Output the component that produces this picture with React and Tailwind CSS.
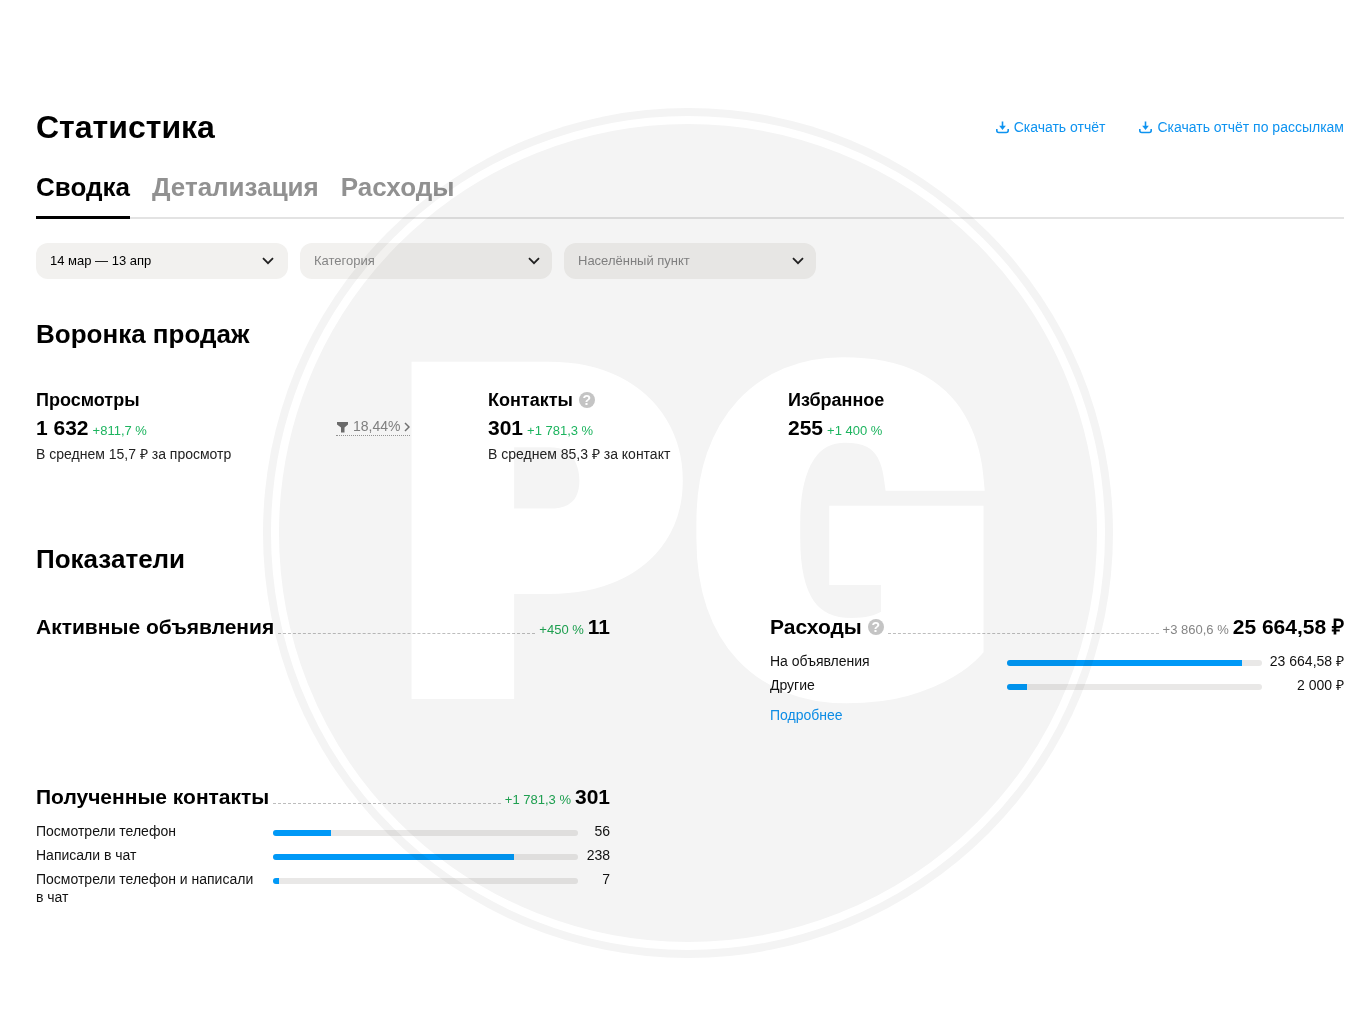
import { useState } from "react";

const tabs = ["Сводка", "Детализация", "Расходы"];

const expenses = [
  { label: "На объявления", value: "23 664,58 ₽", percent: 92 },
  { label: "Другие", value: "2 000 ₽", percent: 8 },
];

const contacts = [
  { label: "Посмотрели телефон", value: "56", percent: 19 },
  { label: "Написали в чат", value: "238", percent: 79 },
  { label: "Посмотрели телефон и написали в чат", value: "7", percent: 2 },
];

const Chevron = ({ className }) => (
  <svg className={className} width="12" height="8" viewBox="0 0 12 8" fill="none" stroke="#222" strokeWidth="1.8">
    <path d="M1 1.2 6 6.2 11 1.2" />
  </svg>
);

const DownloadLink = ({ children }) => (
  <a href="#" className="flex items-center gap-[5px] text-sm text-[#0e93f0]">
    <svg width="13" height="13" viewBox="0 0 13 13" fill="none" stroke="currentColor" strokeWidth="1.6">
      <path d="M6.5 0.5V6" />
      <path d="M3.2 4.8H9.8L6.5 9Z" fill="currentColor" stroke="none" />
      <path d="M0.8 8v1.5c0 1.3.8 2 2 2h7.4c1.2 0 2-.7 2-2V8" />
    </svg>
    {children}
  </a>
);

const HelpButton = () => (
  <button
    type="button"
    aria-label="Подсказка"
    className="flex size-4 shrink-0 items-center justify-center rounded-full bg-[#c4c4c4] text-sm leading-none font-bold text-white"
  >
    ?
  </button>
);

const Filter = ({ label }) => (
  <div className="relative w-[252px]">
    <select
      aria-label={label}
      className="h-9 w-full appearance-none rounded-xl bg-[#f2f1ef] px-3.5 pr-9 text-[13px] text-[#858585]"
    >
      <option>{label}</option>
    </select>
    <Chevron className="pointer-events-none absolute top-3.5 right-3" />
  </div>
);

const FunnelItem = ({ title, value, change, note, help }) => (
  <div>
    <h3 className="flex items-center gap-1.5 text-lg leading-6 font-bold">
      {title}
      {help && <HelpButton />}
    </h3>
    <p className="flex items-baseline gap-1 text-[21px] leading-8 font-bold">
      {value}
      <span className="text-[13px] leading-none font-normal text-[#1db45f]">{change}</span>
    </p>
    {note && <p className="text-sm leading-5 text-[#222]">{note}</p>}
  </div>
);

const Metric = ({ title, value, change, changeColor = "text-[#1fa653]", help, rows = [], children }) => (
  <section>
    <div className="flex h-7 items-baseline gap-1 text-[21px] leading-7 font-bold">
      <h3 className="flex items-center gap-1.5">
        {title}
        {help && <HelpButton />}
      </h3>
      <span className="flex-1 border-b border-dashed border-[#bdbdbd]" />
      <span className={`text-[13px] leading-none font-normal ${changeColor}`}>{change}</span>
      <span>{value}</span>
    </div>
    <ul className="mt-[11px] flex flex-col gap-1.5 text-sm leading-[18px] text-[#111]">
      {rows.map((row) => (
        <li key={row.label} className="grid grid-cols-[237fr_337fr]">
          <span className="pr-4">{row.label}</span>
          <span className="flex items-start">
            <span className="mt-2 h-1.5 flex-1 overflow-hidden rounded-full bg-[#e9e8e7]">
              <span className="block h-full bg-[#0099f7]" style={{ width: `${row.percent}%` }} />
            </span>
            <span className={`text-right ${help ? "w-[82px]" : "w-8"}`}>{row.value}</span>
          </span>
        </li>
      ))}
    </ul>
    {children}
  </section>
);

// Brand mark laid over the whole page
const Watermark = () => (
  <svg
    aria-hidden="true"
    className="pointer-events-none absolute top-[108px] left-1/2 ml-2 size-[850px] -translate-x-1/2 mix-blend-multiply"
    viewBox="0 0 850 850"
  >
    <circle cx="425" cy="425" r="425" fill="#f4f4f4" />
    <circle cx="425" cy="425" r="413" fill="none" stroke="#fff" strokeWidth="8" />
    <g fill="#fff" stroke="#fff" strokeWidth="28" fontFamily="Roboto, sans-serif" fontWeight="900" fontSize="435">
      <text x="139" y="577">P</text>
      <text x="430" y="577">G</text>
    </g>
  </svg>
);

const App = () => {
  const [activeTab, setActiveTab] = useState(tabs[0]);

  return (
    <div className="relative min-h-screen overflow-hidden bg-white pb-16 font-['Liberation_Sans',Arial,sans-serif] text-black">
      <main className="pt-[107px] pr-4 pl-9">
        <header className="flex items-center justify-between">
          <h1 className="text-[32px] leading-10 font-bold">Статистика</h1>
          <div className="flex gap-[34px]">
            <DownloadLink>Скачать отчёт</DownloadLink>
            <DownloadLink>Скачать отчёт по рассылкам</DownloadLink>
          </div>
        </header>

        <nav className="mt-6 flex gap-[22px] shadow-[inset_0_-2px_0_#e3e3e3]">
          {tabs.map((tab) => (
            <button
              key={tab}
              type="button"
              onClick={() => setActiveTab(tab)}
              className={`border-b-3 pb-[13px] text-[26px] leading-8 font-bold ${
                tab === activeTab ? "border-black" : "border-transparent text-[#919191]"
              }`}
            >
              {tab}
            </button>
          ))}
        </nav>

        <div className="mt-6 flex gap-3">
          <button
            type="button"
            className="flex h-9 w-[252px] items-center justify-between rounded-xl bg-[#f2f1ef] px-3.5 text-[13px]"
          >
            14 мар — 13 апр
            <Chevron />
          </button>
          <Filter label="Категория" />
          <Filter label="Населённый пункт" />
        </div>

        <h2 className="mt-[37px] text-[26px] leading-9 font-bold">Воронка продаж</h2>
        <div className="mt-9 grid min-h-[77px] grid-cols-[300fr_152fr_300fr_556fr]">
          <FunnelItem title="Просмотры" value="1 632" change="+811,7 %" note="В среднем 15,7 ₽ за просмотр" />
          <div className="pt-[30px]">
            <button
              type="button"
              className="flex items-center gap-1 border-b border-dotted border-[#999] text-sm leading-[17px] text-[#858585]"
            >
              <svg width="13" height="12" viewBox="0 0 13 12" fill="#6f6f6f">
                <path d="M1 1h11v2.5L8.500 6.5V11.5H5V6.500L1 3.5Z" />
              </svg>
              18,44%
              <svg width="6" height="10" viewBox="0 0 6 10" fill="none" stroke="#757575" strokeWidth="1.5">
                <path d="M1 1 5 5 1 9" />
              </svg>
            </button>
          </div>
          <FunnelItem title="Контакты" value="301" change="+1 781,3 %" note="В среднем 85,3 ₽ за контакт" help />
          <FunnelItem title="Избранное" value="255" change="+1 400 %" />
        </div>

        <h2 className="mt-[76px] text-[26px] leading-9 font-bold">Показатели</h2>
        <div className="mt-9 grid grid-cols-2 gap-x-40 gap-y-[59px]">
          <Metric title="Активные объявления" value="11" change="+450 %" />
          <Metric
            title="Расходы"
            value="25 664,58 ₽"
            change="+3 860,6 %"
            changeColor="text-[#858585]"
            rows={expenses}
            help
          >
            <a href="#" className="mt-3 block w-fit text-sm leading-[18px] text-[#0e93f0]">
              Подробнее
            </a>
          </Metric>
          <Metric title="Полученные контакты" value="301" change="+1 781,3 %" rows={contacts} />
        </div>
      </main>
      <Watermark />
    </div>
  );
};

export default App;
